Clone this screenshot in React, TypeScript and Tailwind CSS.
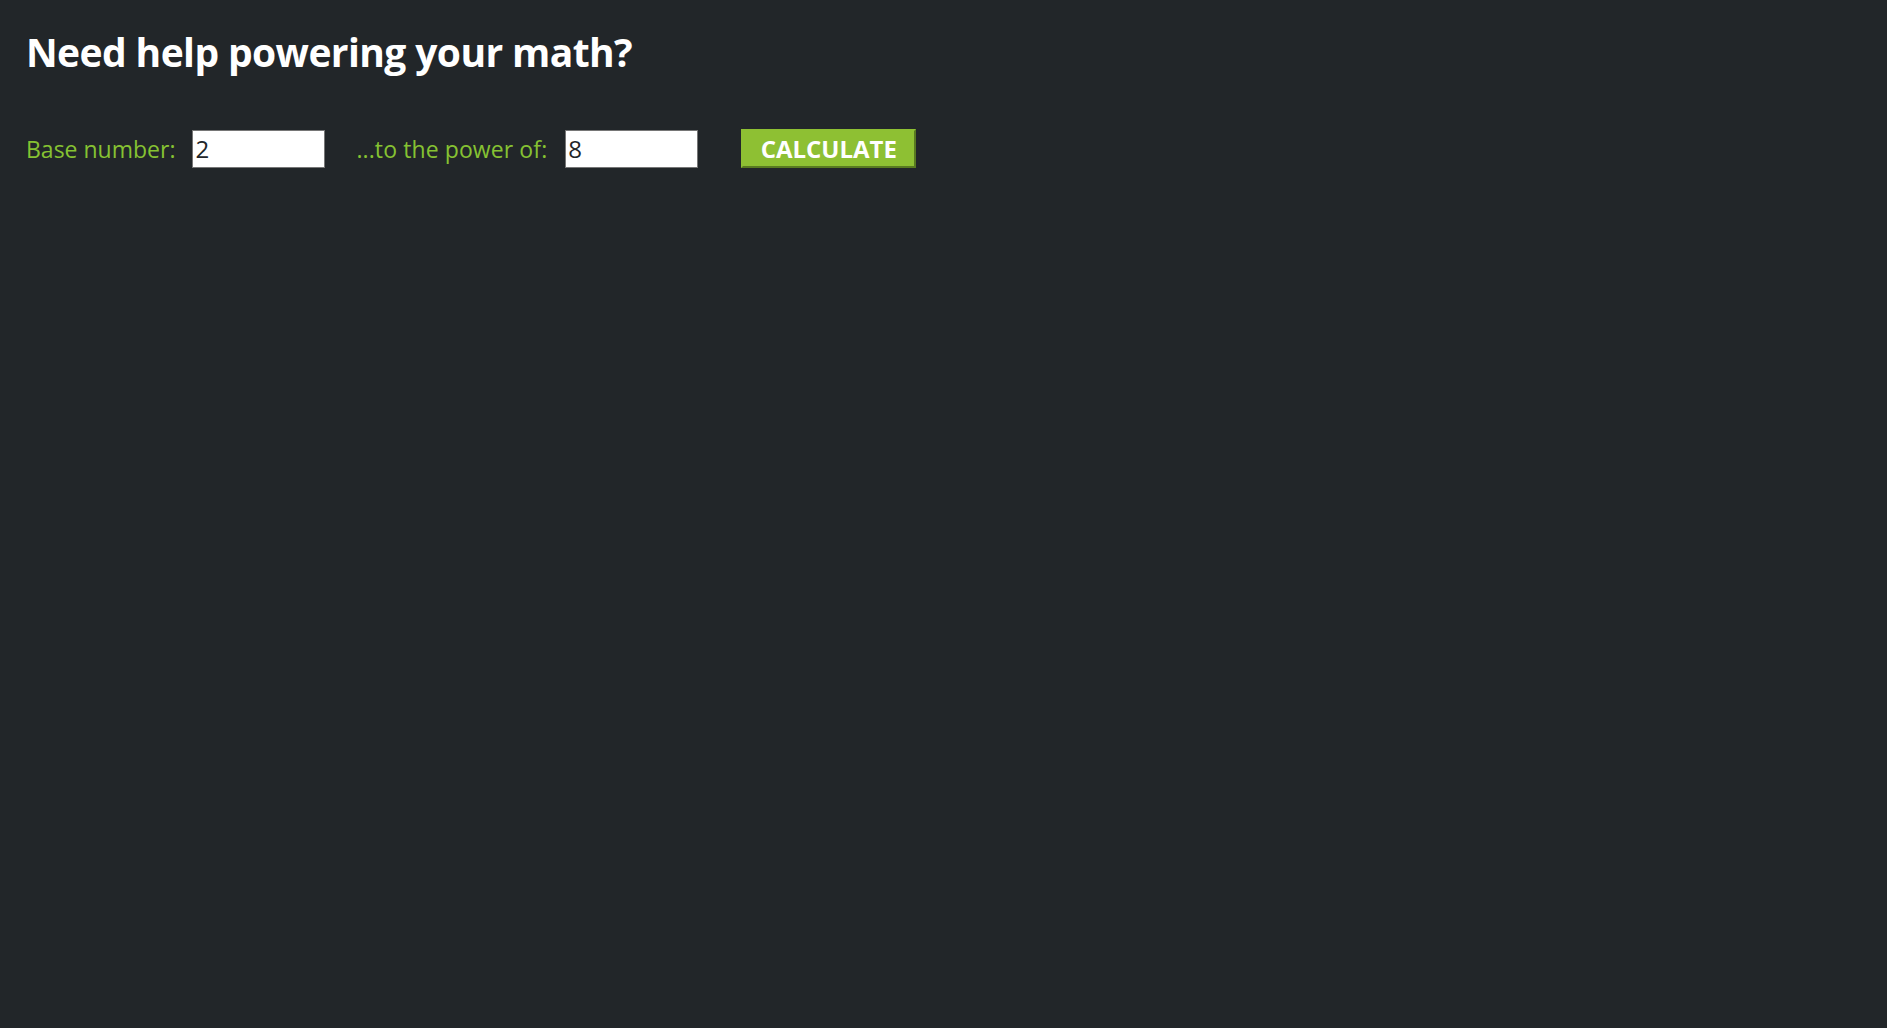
export default function App() {
  return (
    <div
      className="min-h-screen w-full bg-[#222629] px-[26px] pt-[24px]"
      style={{ fontFamily: '"Open Sans", "Noto Sans", sans-serif' }}
    >
      <h1 className="text-[39px] font-bold leading-[56px] tracking-[-0.6px] text-white">
        Need help powering your math?
      </h1>
      <form
        className="mt-[49px] flex items-center"
        onSubmit={(e) => e.preventDefault()}
      >
        <label className="text-[23px] leading-[38px] text-[#86c232]">
          Base number:
        </label>
        <input
          type="text"
          defaultValue="2"
          className="ml-[17px] h-[38px] w-[133px] border border-[#767676] bg-white px-[2px] text-[24px] text-[#222629] outline-none"
        />
        <label className="ml-[31px] text-[23px] leading-[38px] text-[#86c232] tracking-[0.1px]">
          ...to the power of:
        </label>
        <input
          type="text"
          defaultValue="8"
          className="ml-[18px] h-[38px] w-[133px] border border-[#767676] bg-white px-[2px] text-[24px] text-[#222629] outline-none"
        />
        <button
          type="submit"
          className="ml-[43px] h-[39px] w-[175px] border-2 border-t-[#8ec033] border-l-[#8ec033] border-b-[#587a20] border-r-[#587a20] bg-[#8ec033] text-[24px] font-bold text-white"
        >
          CALCULATE
        </button>
      </form>
    </div>
  );
}
